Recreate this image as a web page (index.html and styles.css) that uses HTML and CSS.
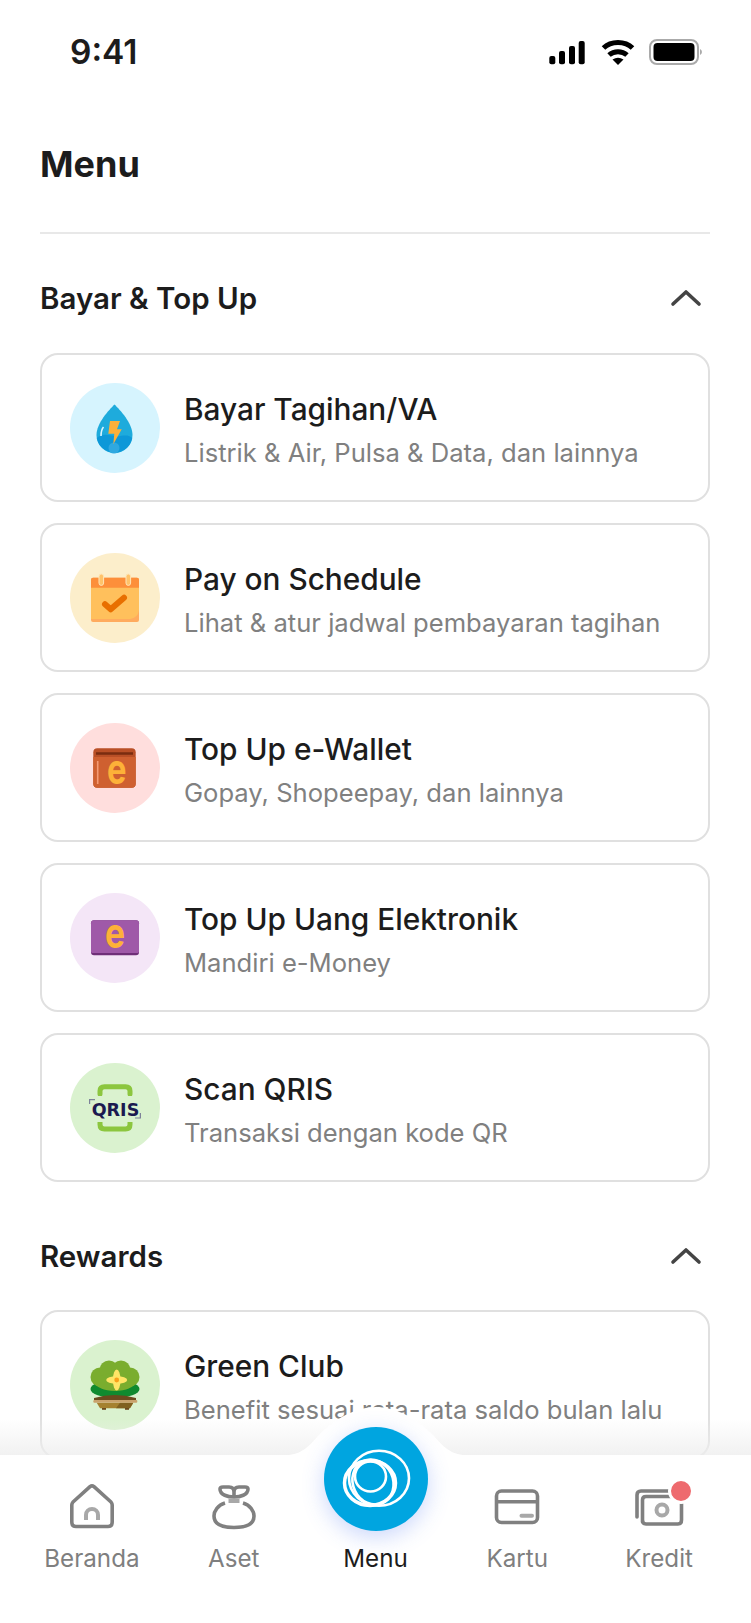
FILE: index.html
```html
<!DOCTYPE html>
<html lang="id">

<head>
    <meta charset="UTF-8">
    <meta name="viewport" content="width=device-width, initial-scale=1.0">
    <title>Menu</title>
    <link rel="stylesheet" href="styles.css">
</head>

<body>
    <div class="screen">
        <div class="status-bar">
            <span class="time">9:41</span>
            <svg class="status-icons" width="160" height="30" viewBox="0 0 160 30">
                <rect x="3.3" y="19" width="6" height="8.3" rx="2" />
                <rect x="13" y="14" width="6" height="13.3" rx="2" />
                <rect x="23" y="9" width="6" height="18.3" rx="2" />
                <rect x="32.7" y="4" width="6" height="23.3" rx="2" />
                <path d="M57.5 11C65 3.5 79 3.5 86.5 11M63 18C68 13.5 76 13.5 81 18" fill="none" stroke="#000" stroke-width="5" />
                <path d="M66.5 22.5Q72 19 77.5 22.5L72 28Z" />
                <rect x="104" y="3" width="48" height="24" rx="7" fill="none" stroke="#aaa" stroke-width="2" />
                <rect x="107.5" y="6" width="41" height="18" rx="4" />
                <path d="M154 12v6q2-1 2-3t-2-3z" fill="#aaa" />
            </svg>
        </div>

        <div class="content">
            <h1 class="page-title">Menu</h1>

            <div class="section-head">
                <h2>Bayar &amp; Top Up</h2>
                <svg class="chevron" width="32" height="20" viewBox="0 0 32 20">
                    <path d="M3 16L16 4L29 16" />
                </svg>
            </div>

            <div class="card-list">
                <div class="card">
                    <svg class="card-icon" width="90" height="90" viewBox="0 0 90 90">
                        <circle cx="45" cy="45" r="45" fill="#d6f4fe" />
                        <path d="M44.5 21.5C50 27 62.5 40 62.5 52A18 18 0 0 1 26.5 52C26.5 40 39 27 44.5 21.5Z" fill="#1eabdc" />
                        <path d="M26.8 55C32 50 38 52 44.5 53C51 54 57 50 62.2 55A18 18 0 0 1 26.8 55Z" fill="#0d98d8" />
                        <circle cx="44" cy="65" r="5.5" fill="#2fa8e0" />
                        <path d="M40 38H50L47 46.3H51.7L43.3 61.3L44.3 50.7H38.3Z" fill="#fbb03b" />
                        <path d="M31 53Q31 47 33.5 44" fill="none" stroke="#d8f4ff" stroke-width="1.6" />
                    </svg>
                    <div class="card-text">
                        <div class="card-title">Bayar Tagihan/VA</div>
                        <div class="card-sub">Listrik &amp; Air, Pulsa &amp; Data, dan lainnya</div>
                    </div>
                </div>

                <div class="card">
                    <svg class="card-icon" width="90" height="90" viewBox="0 0 90 90">
                        <circle cx="45" cy="45" r="45" fill="#fceecb" />
                        <rect x="21" y="24.7" width="48" height="44.3" rx="2" fill="#ffab5e" />
                        <path d="M21 33H69V57Q68 65 60 66H21Z" fill="#ffc05c" />
                        <path d="M21 26.7a2 2 0 0 1 2-2H67a2 2 0 0 1 2 2V34.7H21Z" fill="#fd8f3a" />
                        <rect x="29" y="21" width="4.6" height="11.4" rx="2.3" fill="#ffc36a" stroke="#ffe6b8" stroke-width="1" />
                        <rect x="56" y="21" width="4.6" height="11.4" rx="2.3" fill="#ffc36a" stroke="#ffe6b8" stroke-width="1" />
                        <path d="M35 51.3L40.7 56.3L54 44.7" fill="none" stroke="#e86f00" stroke-width="6" stroke-linecap="round" stroke-linejoin="round" />
                    </svg>
                    <div class="card-text">
                        <div class="card-title">Pay on Schedule</div>
                        <div class="card-sub">Lihat &amp; atur jadwal pembayaran tagihan</div>
                    </div>
                </div>

                <div class="card">
                    <svg class="card-icon" width="90" height="90" viewBox="0 0 90 90">
                        <circle cx="45" cy="45" r="45" fill="#ffdedd" />
                        <rect x="23.3" y="25.3" width="42.4" height="39.4" rx="4" fill="#b94f26" />
                        <path d="M26 30.5H63" stroke="#7a2c10" stroke-width="2.4" />
                        <path d="M23.3 34H65.7V60.7a4 4 0 0 1-4 4H27.3a4 4 0 0 1-4-4Z" fill="#cf6030" />
                        <path d="M27.7 38V61" stroke="#f59a74" stroke-width="1.6" />
                        <text class="icon-e" font-size="42" transform="translate(46.7 60.8) scale(.78 1)">e</text>
                    </svg>
                    <div class="card-text">
                        <div class="card-title">Top Up e-Wallet</div>
                        <div class="card-sub">Gopay, Shopeepay, dan lainnya</div>
                    </div>
                </div>

                <div class="card">
                    <svg class="card-icon" width="90" height="90" viewBox="0 0 90 90">
                        <circle cx="45" cy="45" r="45" fill="#f4e6f7" />
                        <rect x="21" y="27.3" width="48" height="35" rx="3" fill="#6f2f78" />
                        <path d="M21 30.3a3 3 0 0 1 3-3H66a3 3 0 0 1 3 3V58.5a1.5 1.5 0 0 1-1.5 1.5H22.5A1.5 1.5 0 0 1 21 58.5Z" fill="#9f59a8" />
                        <text class="icon-e" font-size="42" transform="translate(45 55.2) scale(.8 1)">e</text>
                    </svg>
                    <div class="card-text">
                        <div class="card-title">Top Up Uang Elektronik</div>
                        <div class="card-sub">Mandiri e-Money</div>
                    </div>
                </div>

                <div class="card">
                    <svg class="card-icon" width="90" height="90" viewBox="0 0 90 90">
                        <circle cx="45" cy="45" r="45" fill="#daf2cf" />
                        <path d="M30 31V28Q30 23.7 34.5 23.7H55.5Q60 23.7 60 28V31M30 59V61.5Q30 66 34.5 66H55.5Q60 66 60 61.5V59" fill="none" stroke="#8cc63f" stroke-width="5" stroke-linecap="round" />
                        <rect x="19" y="33" width="52" height="26" fill="#daf2cf" />
                        <text class="icon-qris" x="21.7" y="53" font-size="18" textLength="47.6" lengthAdjust="spacingAndGlyphs">QRIS</text>
                        <path d="M19.6 41V36.6H25M70.4 50V55H65" fill="none" stroke="#7d8299" stroke-width="1.2" />
                    </svg>
                    <div class="card-text">
                        <div class="card-title">Scan QRIS</div>
                        <div class="card-sub">Transaksi dengan kode QR</div>
                    </div>
                </div>
            </div>

            <div class="section-head section-rewards">
                <h2>Rewards</h2>
                <svg class="chevron" width="32" height="20" viewBox="0 0 32 20">
                    <path d="M3 16L16 4L29 16" />
                </svg>
            </div>

            <div class="card">
                <svg class="card-icon" width="90" height="90" viewBox="0 0 90 90">
                    <circle cx="45" cy="45" r="45" fill="#daf2cf" />
                    <ellipse cx="45" cy="49" rx="24.5" ry="9" fill="#0f8a2f" />
                    <path d="M24 58Q45 52 66 58V61H24Z" fill="#6b4a1e" />
                    <circle cx="30" cy="37" r="9.5" fill="#7aad2e" />
                    <circle cx="60" cy="37" r="9.5" fill="#7aad2e" />
                    <circle cx="39" cy="30" r="9.5" fill="#7aad2e" />
                    <circle cx="51" cy="30" r="9.5" fill="#7aad2e" />
                    <ellipse cx="45" cy="42" rx="20" ry="9" fill="#7aad2e" />
                    <ellipse cx="46.7" cy="40" rx="3.8" ry="10.5" fill="#ffe566" />
                    <ellipse cx="46.7" cy="40" rx="10.5" ry="3.8" fill="#ffe566" />
                    <circle cx="46.7" cy="40" r="2.4" fill="#f9a11b" />
                    <path d="M26.7 62.7H63.3L60 68.3H30Z" fill="#a5812f" />
                    <path d="M50 62.7H63.3L60 68.3H46Z" fill="#80601f" />
                    <rect x="23.3" y="60" width="44" height="2.7" rx="1" fill="#c9a26c" />
                    <rect x="32" y="68" width="4" height="1.8" fill="#6b4a1e" />
                    <rect x="55" y="68" width="4" height="1.8" fill="#6b4a1e" />
                </svg>
                <div class="card-text">
                    <div class="card-title">Green Club</div>
                    <div class="card-sub">Benefit sesuai rata-rata saldo bulan lalu</div>
                </div>
            </div>
        </div>

        <div class="bottom-nav">
            <div class="nav-fade"></div>
            <svg class="nav-notch" width="180" height="48" viewBox="0 0 180 48">
                <path d="M0 48C16 48 24 38 33 28C48 12 70 0 90 0C110 0 132 12 147 28C156 38 164 48 180 48Z" fill="#fff" />
            </svg>

            <div class="nav-item">
                <svg class="nav-icon" width="56" height="56" viewBox="0 0 56 56">
                    <path d="M26 8.6L9 24Q7.8 25.5 7.8 27V44Q7.8 48.5 12 48.5H44Q48.2 48.5 48.2 44V27Q48.2 25.5 47 24L30 8.6Q28 7 26 8.6Z" />
                    <path class="soft" d="M22 42V37a6 6 0 0 1 12 0V42" />
                </svg>
                <span>Beranda</span>
            </div>
            <div class="nav-item">
                <svg class="nav-icon" width="56" height="56" viewBox="0 0 56 56">
                    <path d="M19 25C12 27 8 33 8 38C8 46 15 49.5 28 49.5C41 49.5 48 46 48 38C48 33 44 27 37 25" />
                    <path d="M28 19C22 19 14 17 14 11Q14 9 17 9H23Q28 9 28 14ZM28 19C34 19 42 17 42 11Q42 9 39 9H33Q28 9 28 14Z" />
                    <path class="soft" d="M22.5 23H33.5" />
                </svg>
                <span>Aset</span>
            </div>
            <div class="nav-item nav-active">
                <div class="nav-spacer"></div>
                <span>Menu</span>
                <div class="menu-button">
                    <svg width="104" height="104" viewBox="0 0 104 104">
                        <ellipse cx="55" cy="51.3" rx="30" ry="27.5" />
                        <ellipse cx="46" cy="56" rx="25.5" ry="22.5" stroke-width="3.5" />
                        <ellipse cx="46.5" cy="49.5" rx="15.5" ry="15" />
                        <ellipse cx="49" cy="55" rx="20" ry="23" transform="rotate(-25 49 55)" />
                    </svg>
                </div>
            </div>
            <div class="nav-item">
                <svg class="nav-icon" width="56" height="56" viewBox="0 0 56 56">
                    <rect x="7.5" y="13" width="41" height="31.5" rx="5" />
                    <path d="M7.5 23.7H48.5" />
                    <path class="soft" d="M32.5 37.7H43" stroke-linecap="round" />
                </svg>
                <span>Kartu</span>
            </div>
            <div class="nav-item">
                <svg class="nav-icon" width="56" height="56" viewBox="0 0 56 56">
                    <path d="M6 39V17Q6 13 10 13H40" stroke-linecap="round" />
                    <path d="M11.5 44V22Q11.5 18.5 15 18.5H48Q50.5 18.5 50.5 22V42Q50.5 46 47 46H15Q11.5 46 11.5 42Z" />
                    <circle class="soft" cx="31" cy="32" r="5.5" />
                    <circle class="nav-badge" cx="50" cy="13" r="11.5" />
                </svg>
                <span>Kredit</span>
            </div>
        </div>
    </div>
</body>

</html>
```

FILE: styles.css
```css
* {
    box-sizing: border-box;
}

body {
    margin: 0;
    background: #fff;
    font-family: Inter, "Noto Sans", sans-serif;
    color: #1c1c1c;
}

.screen {
    width: 751px;
    height: 1623px;
    display: flex;
    flex-direction: column;
    overflow: hidden;
}

.status-bar {
    height: 104px;
    flex: none;
    display: flex;
    align-items: center;
    justify-content: space-between;
    padding: 0 45px 0 70px;
}

.time {
    font-size: 33.5px;
    font-weight: 600;
}

.content {
    flex: 1;
    min-height: 0;
    overflow: hidden;
    padding: 0 41px 0 40px;
}

.page-title {
    margin: 0;
    height: 130px;
    padding-top: 38px;
    font-size: 36px;
    line-height: 44px;
    font-weight: 700;
    border-bottom: 2px solid #e8e8e8;
}

.section-head {
    display: flex;
    align-items: center;
    justify-content: space-between;
    height: 42px;
    margin-top: 43px;
    margin-bottom: 34px;
    padding-right: 8px;
}

.section-head h2 {
    margin: 0;
    font-size: 29.5px;
    font-weight: 600;
}

.section-rewards {
    margin-top: 53px;
    margin-bottom: 33px;
}

.chevron path {
    fill: none;
    stroke: #444;
    stroke-width: 3.6;
    stroke-linecap: round;
    stroke-linejoin: round;
}

.card-list {
    display: flex;
    flex-direction: column;
    gap: 21px;
}

.card {
    height: 149px;
    display: flex;
    align-items: center;
    gap: 24px;
    padding: 0 28px;
    border: 2px solid #e0e0e0;
    border-radius: 18px;
}

.card-icon {
    flex: none;
}

.card-text {
    padding-top: 5px;
}

.icon-e {
    font-family: Inter, sans-serif;
    font-weight: 700;
    fill: #fdb138;
    text-anchor: middle;
}

.icon-qris {
    font-family: "DejaVu Sans", sans-serif;
    font-weight: 700;
    fill: #1b1a50;
}

.card-title {
    font-size: 29.8px;
    line-height: 42px;
    font-weight: 450;
}

.card-sub {
    margin-top: 3px;
    font-size: 25.6px;
    line-height: 40px;
    color: #808080;
}

.bottom-nav {
    position: relative;
    flex: none;
    height: 168px;
    display: flex;
    padding: 23px 21px 0;
    background: #fff;
}

.nav-fade {
    position: absolute;
    left: 0;
    right: 0;
    bottom: 100%;
    height: 36px;
    background: linear-gradient(rgba(238, 238, 238, 0), rgba(238, 238, 238, 0.8));
}

.nav-notch {
    position: absolute;
    left: 286px;
    bottom: 100%;
}

.nav-item {
    position: relative;
    flex: 1;
    display: flex;
    flex-direction: column;
    align-items: center;
    font-size: 24.2px;
    line-height: 32px;
    color: #7f7f7f;
}

.nav-item span {
    margin-top: 9px;
}

.nav-active {
    color: #1c1c1c;
}

.nav-spacer {
    height: 56px;
}

.nav-icon {
    overflow: visible;
    fill: none;
    stroke: #808080;
    stroke-width: 3.6;
    stroke-linejoin: round;
}

.nav-icon .soft {
    stroke: #a8a8a8;
    stroke-width: 4;
}

.nav-icon .nav-badge {
    fill: #ee6a6e;
    stroke: #fff;
    stroke-width: 3;
}

.menu-button {
    position: absolute;
    top: -51px;
    left: 19px;
    width: 104px;
    height: 104px;
    border-radius: 50%;
    background: #00a5e0;
    box-shadow: 0 6px 22px rgba(70, 110, 240, 0.28);
}

.menu-button svg {
    display: block;
    fill: none;
    stroke: #fff;
    stroke-width: 2.6;
}
```
